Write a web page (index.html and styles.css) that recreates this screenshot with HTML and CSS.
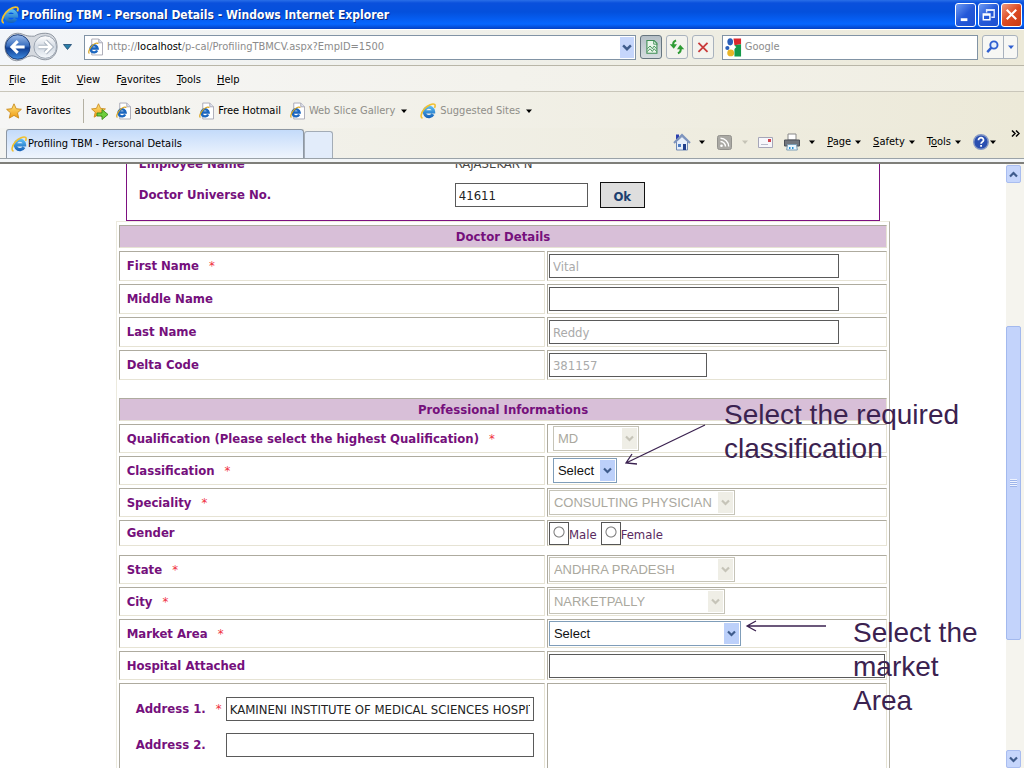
FILE: index.html
```
<!DOCTYPE html>
<html lang="en">
<head>
<meta charset="utf-8">
<title>Profiling TBM - Personal Details</title>
<link rel="stylesheet" href="styles.css">
</head>
<body>
<svg class="defs" aria-hidden="true">
  <defs>
    <linearGradient id="gBlue" x1="0" y1="0" x2="0" y2="1"><stop offset="0" stop-color="#9dbce8"/><stop offset=".45" stop-color="#3a6fc0"/><stop offset=".55" stop-color="#0f3f94"/><stop offset="1" stop-color="#3f8be0"/></linearGradient>
    <linearGradient id="gGrey" x1="0" y1="0" x2="0" y2="1"><stop offset="0" stop-color="#fff"/><stop offset=".5" stop-color="#d3dae3"/><stop offset="1" stop-color="#f6f9fc"/></linearGradient>
    <linearGradient id="gStar" x1="0" y1="0" x2="0" y2="1"><stop offset="0" stop-color="#ffe680"/><stop offset="1" stop-color="#f09a10"/></linearGradient>
    <linearGradient id="gE" gradientUnits="userSpaceOnUse" x1="0" y1="3" x2="0" y2="15"><stop offset="0" stop-color="#5cc0f6"/><stop offset="1" stop-color="#1560b8"/></linearGradient>
    <symbol id="ie" viewBox="0 0 16 16">
      <path d="M13 11.200A4.700 4.700 0 1 1 13.600 8.800H5" fill="none" stroke="url(#gE)" stroke-width="3.200"/>
      <path d="M2.600 15C.2 14.800 .6 10.300 4.200 6 7.800 1.800 13 .2 14.600 1.400c.8.700.6 2-.1 3.400" fill="none" stroke="#f0c030" stroke-width="1.600"/>
    </symbol>
    <symbol id="iepage" viewBox="0 0 16 18">
      <path d="M4 .5h7.500l4 4v13H4z" fill="#fff" stroke="#a7a7b4"/>
      <path d="M11.500.5v4h4" fill="#dfe3ee" stroke="#a7a7b4"/>
      <path d="M9.800 12.700A3.800 3.800 0 1 1 10.200 10.500H3.500" fill="none" stroke="#1b66c0" stroke-width="2.600"/>
      <path d="M1.500 16C-.2 15 1.500 10.500 4.500 7.500 7 5 10 4 11 5.500" fill="none" stroke="#d9a520" stroke-width="1.300"/>
    </symbol>
    <symbol id="star" viewBox="0 0 16 16"><path d="M8 .8l2.200 4.900 5.200.6-3.900 3.500 1.200 5.300L8 12.400l-4.700 2.700 1.200-5.300L.6 6.300l5.200-.6z" fill="url(#gStar)" stroke="#c98a1c" stroke-width=".9"/></symbol>
    <symbol id="caret" viewBox="0 0 6 4"><path d="M0 .5h6L3 4z" fill="currentColor"/></symbol>
    <symbol id="chev" viewBox="0 0 9 8"><path d="M1 2l3.500 3.500L8 2" fill="none" stroke="currentColor" stroke-width="2.200"/></symbol>
  </defs>
</svg>

<header class="titlebar">
  <svg class="i18"><use href="#ie"/></svg>
  <h1 class="title">Profiling TBM - Personal Details - Windows Internet Explorer</h1>
  <button class="winbtn" aria-label="Minimize"><svg viewBox="0 0 20 22"><path d="M5 15h7v3H5z" fill="#fff"/></svg></button>
  <button class="winbtn" aria-label="Restore"><svg viewBox="0 0 20 22"><path d="M8 9V6h8v8h-3M8 6.500h8" fill="none" stroke="#dfe8fb" stroke-width="1.500"/><path d="M4.500 10.500h7v6h-7zM4.500 11.500h7" fill="none" stroke="#fff" stroke-width="1.500"/></svg></button>
  <button class="winbtn close" aria-label="Close"><svg viewBox="0 0 20 22"><path d="M5 6l10 10M15 6L5 16" stroke="#fff" stroke-width="2.200"/></svg></button>
</header>

<div class="navbar">
  <button class="travel" aria-label="Back and forward">
    <svg viewBox="0 0 56 32">
      <path d="M14 2c5 0 7 3 14 3h3c3-2 6-3 11-3 9 0 12 7 12 14s-5 13-12 13-8-4-14-4-8 5-15 5S1 23 1 16 6 2 14 2z" fill="#d5d9df" stroke="#8d949e"/>
      <circle cx="14" cy="16" r="12.500" fill="url(#gBlue)" stroke="#1b3d7a"/>
      <path d="M21 16H9M14 10l-6 6 6 6" fill="none" stroke="#fff" stroke-width="3"/>
      <circle cx="42" cy="16" r="11.500" fill="url(#gGrey)" stroke="#9aa3af"/>
      <path d="M35 16h12M42 10l6 6-6 6" fill="none" stroke="#aab4c0" stroke-width="4.500"/>
      <path d="M35 16h12M42 10l6 6-6 6" fill="none" stroke="#fff" stroke-width="2.500"/>
    </svg>
  </button>
  <button class="plain recent" aria-label="Recent pages"><svg viewBox="0 0 9 6"><path d="M.5.5h8L4.500 5.500z" fill="#2a7fa8" stroke="#1d4770" stroke-width=".8"/></svg></button>
  <div class="address">
    <svg class="page"><use href="#iepage"/></svg>
    <div class="url" role="textbox" aria-label="Address" contenteditable="true" spellcheck="false">http://<span class="host">localhost</span>/p-cal/ProfilingTBMCV.aspx?EmpID=1500</div>
    <button class="drop" aria-label="Show address list"><svg><use href="#chev"/></svg></button>
  </div>
  <button class="navbtn compat" aria-label="Compatibility view"><svg viewBox="0 0 22 24"><path d="M6.500 5h8l3 3v11h-11z" fill="#e9f6ea" stroke="#3f8f55" stroke-width="1.200"/><path d="M14 5v4h4M7 14l3-3 2.500 3 2-3 2.500 3M7 17l3-3 2.500 3 2-3 2.500 3" fill="none" stroke="#3f8f55"/></svg></button>
  <button class="navbtn" aria-label="Refresh"><svg viewBox="0 0 22 24"><path d="M10 5C7 6 6.500 8 7 10" fill="none" stroke="#2d9b33" stroke-width="2.200"/><path d="M3 9h8L7.500 14z" fill="#2d9b33"/><path d="M12 19c3-1 3.500-3 3-6" fill="none" stroke="#2d9b33" stroke-width="2.200"/><path d="M11 14.500h8L14.500 9.500z" fill="#2d9b33"/></svg></button>
  <button class="navbtn" aria-label="Stop"><svg viewBox="0 0 22 24"><path d="M6 7.500l10 10M16 7.500l-10 10" stroke="#c93a3a" stroke-width="2"/></svg></button>
  <div class="search">
    <svg class="google" viewBox="0 0 18 19"><path d="M9 0h8v6l-7 1z" fill="#d9282e"/><path d="M10 7l7-1v13h-7z" fill="#159a4a"/><ellipse cx="5.500" cy="3.500" rx="3" ry="3.800" fill="#2a5fb8"/><circle cx="2.500" cy="10" r="2.200" fill="#2a5fb8"/><circle cx="6" cy="15.200" r="3.600" fill="#eab526"/><path d="M8 6l4 3-3 3" fill="#fff"/></svg>
    <input class="searchbox" type="text" placeholder="Google" aria-label="Search">
  </div>
  <div class="split">
    <button class="go" aria-label="Search"><svg viewBox="0 0 20 24"><circle cx="11.500" cy="9.500" r="3.800" fill="#e6f0fc" stroke="#2f5fd0" stroke-width="2"/><path d="M8.800 12.200L4.500 17" stroke="#2f5fd0" stroke-width="2.500"/></svg></button>
    <button class="more" aria-label="Search options"><svg><use href="#caret"/></svg></button>
  </div>
</div>

<nav class="menubar">
  <button><u>F</u>ile</button><button><u>E</u>dit</button><button><u>V</u>iew</button><button>F<u>a</u>vorites</button><button><u>T</u>ools</button><button><u>H</u>elp</button>
</nav>

<nav class="favbar">
  <button class="fav first"><svg class="i16"><use href="#star"/></svg>Favorites</button>
  <button class="fav add" aria-label="Add to Favorites bar"><svg class="i18" viewBox="0 0 18 18"><use href="#star" width="15" height="15" y="1"/><path d="M6 11h5V7.500l6 5-6 5V14H6z" fill="#6fce3c" stroke="#3a8a1c" stroke-width=".9"/></svg></button>
  <a class="fav" href="#"><svg class="page"><use href="#iepage"/></svg>aboutblank</a>
  <a class="fav" href="#"><svg class="page"><use href="#iepage"/></svg>Free Hotmail</a>
  <a class="fav dim" href="#"><svg class="page"><use href="#iepage"/></svg>Web Slice Gallery<svg class="caret"><use href="#caret"/></svg></a>
  <a class="fav dim" href="#"><svg class="i16"><use href="#ie"/></svg>Suggested Sites<svg class="caret"><use href="#caret"/></svg></a>
</nav>

<div class="tabrow">
  <button class="tab"><svg class="i16"><use href="#ie"/></svg>Profiling TBM - Personal Details</button>
  <button class="newtab" aria-label="New tab"></button>
  <div class="commands">
    <button class="cmd" aria-label="Home"><svg class="i18" viewBox="0 0 18 18"><path d="M3.500 8.500V17h11V8.500L9 3.500z" fill="#e6eefa" stroke="#7089b4"/><path d="M3 1.500h3v5H3z" fill="#2b3fae"/><path d="M1 10l8-8 8 8" fill="none" stroke="#7d93bd" stroke-width="2"/><path d="M10 11h3v6h-3z" fill="#1f3e8c"/><path d="M5 11h3v3H5z" fill="#4d7cc4"/></svg><svg class="caret"><use href="#caret"/></svg></button>
    <button class="cmd off" aria-label="Feeds"><svg class="i15" viewBox="0 0 15 15"><rect x=".5" y=".5" width="14" height="14" rx="2" fill="#aaa9a4" stroke="#94938e"/><circle cx="4.500" cy="10.700" r="1.300" fill="#fff"/><path d="M3.500 6.500a5 5 0 0 1 5 5M3.500 3.300a8.200 8.200 0 0 1 8.200 8.200" fill="none" stroke="#fff" stroke-width="1.400"/></svg><svg class="caret"><use href="#caret"/></svg></button>
    <button class="cmd mail" aria-label="Read mail"><svg class="i15" viewBox="0 0 15 15"><path d="M.5 2.500h14v10H.5z" fill="#f7f7fb" stroke="#a6a6b8"/><path d="M3 9.500h7" stroke="#b9bccb"/><path d="M10 4h3v3h-3z" fill="#d0444f"/></svg></button>
    <button class="cmd" aria-label="Print"><svg class="i18" viewBox="0 0 18 18"><path d="M5 1h8v6H5z" fill="#fff" stroke="#888"/><path d="M1.500 7h15v6h-15z" fill="#71757d" stroke="#4c5058"/><path d="M4.500 11.500h9l.8 5.500H3.700z" fill="#eaf6ff" stroke="#7c9db5"/><path d="M6 14h1.500v2H6zM9 14h1.500v2H9z" fill="#2f92d0"/></svg><svg class="caret"><use href="#caret"/></svg></button>
    <button class="cmd text"><span><u>P</u>age</span><svg class="caret"><use href="#caret"/></svg></button>
    <button class="cmd text"><span><u>S</u>afety</span><svg class="caret"><use href="#caret"/></svg></button>
    <button class="cmd text"><span>T<u>o</u>ols</span><svg class="caret"><use href="#caret"/></svg></button>
    <button class="cmd help" aria-label="Help"><svg class="i16" viewBox="0 0 16 16"><circle cx="8" cy="8" r="7.300" fill="#2a4fb0" stroke="#8497c4" stroke-width="1.400"/><path d="M5.500 6.200c0-3.400 5.200-3.200 5 0-.1 1.700-2.400 1.700-2.400 3.600M8.100 11v1.800" fill="none" stroke="#fff" stroke-width="1.800"/></svg><svg class="caret"><use href="#caret"/></svg></button>
    <button class="overflow" aria-label="More commands"><svg viewBox="0 0 9 7"><path d="M1 .5l3 3-3 3M5 .5l3 3-3 3" fill="none" stroke="#000" stroke-width="1.500"/></svg></button>
  </div>
</div>

<div class="viewport">
  <main class="page-area">
    <section class="lookup">
      <div class="lrow"><span class="label">Employee Name</span><span class="value">RAJASEKAR N</span></div>
      <div class="lrow">
        <label class="label" for="uni">Doctor Universe No.</label>
        <span class="pair"><input id="uni" class="box" type="text" value="41611"><button class="ok">Ok</button></span>
      </div>
    </section>

    <table class="details">
      <colgroup><col class="c1"><col></colgroup>
      <tbody>
      <tr class="head"><th colspan="2">Doctor Details</th></tr>
      <tr class="tall"><td><label for="fn">First Name</label><i>*</i></td><td><input id="fn" class="box long" value="Vital" disabled></td></tr>
      <tr class="tall"><td><label for="mn">Middle Name</label></td><td><input id="mn" class="box long"></td></tr>
      <tr class="tall"><td><label for="ln">Last Name</label></td><td><input id="ln" class="box long" value="Reddy" disabled></td></tr>
      <tr class="tall"><td><label for="dc">Delta Code</label></td><td><input id="dc" class="box code" value="381157" disabled></td></tr>
      <tr class="gap"><td colspan="2"></td></tr>
      <tr class="head"><th colspan="2">Professional Informations</th></tr>
      <tr><td><label for="q">Qualification (Please select the highest Qualification)</label><i>*</i></td><td><span class="sel s86 inset off"><select id="q" disabled><option>MD</option></select><svg><use href="#chev"/></svg></span></td></tr>
      <tr><td><label for="cl">Classification</label><i>*</i></td><td><span class="sel s64 inset"><select id="cl"><option>Select</option></select><svg><use href="#chev"/></svg></span></td></tr>
      <tr><td><label for="sp">Speciality</label><i>*</i></td><td><span class="sel s186 off"><select id="sp" disabled><option>CONSULTING PHYSICIAN</option></select><svg><use href="#chev"/></svg></span></td></tr>
      <tr class="short"><td>Gender</td><td><div class="radios"><input type="radio" name="g" id="m"><label for="m">Male</label><input type="radio" name="g" id="f"><label for="f">Female</label></div></td></tr>
      <tr class="gap small"><td colspan="2"></td></tr>
      <tr><td><label for="st">State</label><i>*</i></td><td><span class="sel s186 off"><select id="st" disabled><option>ANDHRA PRADESH</option></select><svg><use href="#chev"/></svg></span></td></tr>
      <tr><td><label for="ci">City</label><i>*</i></td><td><span class="sel s176 off"><select id="ci" disabled><option>NARKETPALLY</option></select><svg><use href="#chev"/></svg></span></td></tr>
      <tr><td><label for="ma">Market Area</label><i>*</i></td><td><span class="sel s192"><select id="ma"><option>Select</option></select><svg><use href="#chev"/></svg></span></td></tr>
      <tr><td><label for="ha">Hospital Attached</label></td><td><input id="ha" class="box full"></td></tr>
      <tr class="addr"><td>
        <div class="arow"><span><label for="a1">Address 1.</label><i>*</i></span><input id="a1" class="box" value="KAMINENI INSTITUTE OF MEDICAL SCIENCES HOSPITAL"></div>
        <div class="arow"><span><label for="a2">Address 2.</label></span><input id="a2" class="box"></div>
      </td><td></td></tr>
      </tbody>
    </table>
  </main>
  <div class="scroll" aria-hidden="true">
    <span class="sbtn up"><svg><use href="#chev"/></svg></span>
    <span class="above"></span>
    <span class="thumb"><b></b></span>
    <span class="below"></span>
    <span class="sbtn"><svg><use href="#chev"/></svg></span>
  </div>

  <p class="note one">Select the required<br>classification</p>
  <svg class="arrow a-one" viewBox="0 0 84 44"><path d="M82 2L3 40M9 31L3 40l11 1" fill="none" stroke="#3b2250" stroke-width="1.300"/></svg>
  <p class="note two">Select the<br>market<br>Area</p>
  <svg class="arrow a-two" viewBox="0 0 82 14"><path d="M81 7H2M11 2L2 7l9 5" fill="none" stroke="#3b2250" stroke-width="1.300"/></svg>
</div>
</body>
</html>
```
FILE: styles.css
```
* { box-sizing: border-box; }
body {
  margin: 0;
  height: 100vh;
  display: flex;
  flex-direction: column;
  overflow: hidden;
  background: #fff;
  color: #000;
  font: 11px/16px "DejaVu Sans Condensed", Tahoma, sans-serif;
}
button, input, select { font: inherit; color: inherit; margin: 0; padding: 0; border-radius: 0; }
button { border: 0; background: none; flex: none; }
svg { display: block; flex: none; }
.defs { position: absolute; width: 0; height: 0; }
.i15 { width: 15px; height: 15px; }
.i16 { width: 16px; height: 16px; }
.i18 { width: 18px; height: 18px; }
.page { width: 15px; height: 18px; }
.caret { width: 6px; height: 4px; color: #000; }

/* title bar */
.titlebar {
  flex: none;
  height: 29px;
  display: flex;
  align-items: center;
  gap: 2px;
  padding: 0 2px 0 1px;
  background: linear-gradient(#2a6fe8 0, #0a50dc 3px, #0450dc 12px, #0666ff 24px, #0340c4 29px);
}
.title {
  flex: 1;
  margin: 0;
  overflow: hidden;
  white-space: nowrap;
  font-size: 12px;
  font-weight: 700;
  color: #fff;
  text-shadow: 1px 1px 0 #0a2a80;
}
.winbtn {
  width: 21px;
  height: 24px;
  border: 1px solid #fff;
  border-radius: 3px;
  background: linear-gradient(135deg, #6f9cf4, #2458d8 50%, #1d4fd0);
}
.winbtn.close { background: linear-gradient(135deg, #f09a80, #dd4a22 50%, #c83a14); }

/* address row */
.navbar {
  flex: none;
  height: 37px;
  display: flex;
  align-items: center;
  gap: 4px;
  padding: 0 6px 0 4px;
  background: linear-gradient(90deg, #f3f6fa, #ece9d8);
  border-bottom: 1px solid #b9b6a8;
  box-shadow: inset 0 1px #fff;
}
.travel svg { width: 55px; height: 32px; }
.recent { margin-right: 8px; }
.recent svg { width: 9px; height: 6px; }
.address, .search {
  height: 25px;
  display: flex;
  align-items: center;
  background: #fff;
  border: 1px solid #8193a5;
}
.address { flex: 555; gap: 4px; padding-left: 3px; }
.search { flex: 256; margin-left: 4px; gap: 3px; padding-left: 2px; }
.url { flex: 1; color: #8b8b8b; outline: 0; white-space: nowrap; }
.host { color: #000; }
.drop {
  width: 14px;
  height: 21px;
  margin-right: 1px;
  padding: 6px 2px;
  background: #c6d6fb;
  color: #3f5c8c;
}
.drop svg { width: 10px; height: 9px; }
.navbtn {
  width: 22px;
  height: 24px;
  border: 1px solid #a9b2bd;
  border-radius: 3px;
  background: #f3f3ee;
}
.navbtn.compat { background: linear-gradient(#b5bfc6, #d6dde0); border-color: #66757f; }
.google { width: 17px; height: 19px; }
.searchbox { flex: 1; min-width: 0; border: 0; background: none; outline: 0; }
.searchbox::placeholder { color: #8b8b8b; opacity: 1; }
.split { display: flex; height: 24px; border: 1px solid #a9b2bd; border-radius: 3px; background: #f7f7f4; }
.go { width: 20px; }
.go svg { width: 19px; }
.more { width: 14px; padding: 0 4px; border-left: 1px solid #a9b2bd; color: #2f5fd0; }
.more svg { width: 6px; height: 4px; }

/* menu and favourites */
.menubar {
  flex: none;
  height: 26px;
  display: flex;
  align-items: center;
  gap: 16px;
  padding: 2px 9px 0;
  background: linear-gradient(90deg, #f6f6f6, #f0eee2);
  border-bottom: 1px solid #c9c6ba;
}
.favbar {
  flex: none;
  height: 36px;
  display: flex;
  align-items: center;
  gap: 9px;
  padding: 2px 6px 0;
  background: linear-gradient(90deg, #f6f6f5, #ece9d8);
}
.fav { display: flex; align-items: center; gap: 4px; color: #000; text-decoration: none; white-space: nowrap; }
.fav.first { padding-right: 12px; border-right: 1px solid #b4b1a3; height: 24px; }
.fav.add { margin: 0 -2px; }
.fav.dim { color: #8f8e88; }
.fav .caret { margin: 0 4px 0 2px; }

/* tabs and command bar */
.tabrow {
  flex: none;
  height: 36px;
  display: flex;
  align-items: flex-end;
  padding: 0 4px 4px 6px;
  background: linear-gradient(#9aa2a8, #9aa2a8) 0 30px / 100% 1px no-repeat, linear-gradient(#f3f6f8, #f3f6f8) 0 31px / 100% 4px no-repeat, linear-gradient(90deg, #f4f4f1, #ece9d8);
  border-bottom: 2px solid #7f7f7a;
}
.tab {
  flex: 0 1 298px;
  height: 29px;
  display: flex;
  align-items: center;
  gap: 1px;
  padding: 0 4px;
  border: 1px solid #8d97a3;
  border-bottom: 0;
  border-radius: 3px 3px 0 0;
  background: linear-gradient(#c4dbfa, #eff5fd);
  white-space: nowrap;
}
.newtab { width: 29px; height: 27px; border: 1px solid #a3acb6; border-bottom: 0; border-radius: 3px 3px 0 0; background: #e2ecfa; }
.commands { margin-left: auto; display: flex; align-items: center; gap: 12px; height: 32px; }
.cmd { display: flex; align-items: center; gap: 8px; }
.cmd.off .caret { color: #c5c3b6; margin-left: 2px; }
.cmd.text { gap: 4px; }
.cmd.help { gap: 1px; }
.cmd.mail { margin: 0 -2px; }
.overflow { align-self: flex-start; padding-top: 4px; margin-left: 3px; }
.overflow svg { width: 9px; height: 7px; }

/* page */
.viewport {
  flex: 1;
  min-height: 0;
  display: flex;
  position: relative;
  overflow: hidden;
  font: 13px/16px "DejaVu Sans Condensed", Verdana, sans-serif;
}
.page-area { flex: 1; min-width: 0; overflow: hidden; }
.lookup {
  width: 75%;
  margin: -8px auto 0;
  padding: 0 0 12px 12px;
  border: 1px solid #7d1080;
  border-top: 0;
  display: grid;
  gap: 10px;
}
.lrow { display: grid; grid-template-columns: 316px 1fr; align-items: center; }
.label, .details { color: #75107c; font-weight: 700; }
.value { font-weight: 400; color: #444; }
.pair { display: flex; align-items: center; gap: 12px; }
.pair .box { width: 133px; }
.box {
  display: block;
  height: 24px;
  border: 1px solid #5a5a5a;
  background: #fff;
  padding: 0 3px;
  font-weight: 400;
  color: #222;
}
.box:disabled { color: #aaa; }
.ok { width: 45px; height: 26px; border: 1px solid #111; background: #dedede; color: #1c3f70; font-weight: 700; padding-top: 3px; }

.details {
  width: 77%;
  margin: 0 auto;
  table-layout: fixed;
  border-collapse: separate;
  border-spacing: 2px 3px;
  border: 1px solid #eceade;
  border-right-color: #b5b2a6;
}
.c1 { width: 55.6%; }
.details tr { height: 29px; }
.details td, .details th {
  padding: 0 1px;
  border: 1px solid #e6e3d4;
  border-top-color: #aeab9f;
  border-left-color: #aeab9f;
  vertical-align: middle;
}
.details td:first-child { padding-left: 7px; }
.details .head { height: 23px; }
.details th { background: #d8bfd8; }
.details .tall { height: 30px; }
.details .short { height: 26px; }
.details .gap { height: 12px; }
.details .gap td { border: 0; padding: 0; }
.details .small { height: 3px; }
.details i { margin-left: 10px; font-style: normal; font-weight: 400; color: #f03040; }
.long { width: 290px; max-width: 100%; }
.code { width: 158px; }
.full { width: 100%; }

.sel { display: block; position: relative; height: 25px; font: 13px/16px "Liberation Sans", Arial, sans-serif; color: #111; }
.sel select {
  appearance: none;
  width: 100%;
  height: 25px;
  padding: 0 18px 0 4px;
  border: 1px solid #7f9db9;
  background: #fff;
  color: #111;
  opacity: 1;
}
.sel svg {
  position: absolute;
  top: 2px;
  right: 2px;
  width: 15px;
  height: 21px;
  padding: 6px 3px;
  background: #bcd0fa;
  color: #3f5c8c;
  pointer-events: none;
}
.sel.off select { border-color: #c6c4b8; color: #aaa89e; }
.sel.off svg { background: #efeee6; color: #c6c4b8; }
.inset { margin-left: 4px; }
.s64 { width: 64px; }
.s86 { width: 86px; }
.s176 { width: 176px; }
.s186 { width: 186px; }
.s192 { width: 192px; }

.radios { display: flex; align-items: center; font-weight: 400; color: #5a2a60; }
.radios label { padding-top: 4px; margin-right: 4px; }
.radios input {
  appearance: none;
  width: 20px;
  height: 23px;
  border: 1px solid #555;
  background: radial-gradient(circle at 9px 9px, #fff 4px, #777 5px, #fff 6px);
}

.details .addr { height: 120px; }
.addr td { vertical-align: top; }
.addr td:first-child { padding: 13px 10px 0 16px; }
.arow { display: grid; grid-template-columns: 90px 1fr; align-items: center; margin-bottom: 12px; }
.arow .box { width: 100%; }

/* scroll bar */
.scroll { flex: none; width: 18px; display: flex; flex-direction: column; padding: 1px 3px 0 0; background: #f5f4ee; }
.sbtn { height: 18px; padding: 4px 2px; border: 1px solid #a9bdf0; border-radius: 2px; background: #c6d6fc; color: #3f5c8c; }
.sbtn svg { width: 9px; height: 9px; }
.sbtn.up svg { transform: rotate(180deg); }
.above { flex: 143; }
.below { flex: 110; }
.thumb { flex: 313; display: flex; align-items: center; justify-content: center; border: 1px solid #a3b9ee; border-radius: 2px; background: #c3d3fb; }
.thumb b { width: 7px; height: 8px; background: repeating-linear-gradient(#eef3ff 0 1px, #9db4ea 1px 2px); }

/* callouts drawn over the page */
.note { position: absolute; margin: 0; font: 28px/34px "Liberation Sans", Arial, sans-serif; color: #3b2250; white-space: nowrap; }
.arrow { position: absolute; }
.note.one { left: 724px; top: 234px; }
.a-one { left: 623px; top: 259px; width: 84px; height: 44px; }
.note.two { left: 853px; top: 452px; }
.a-two { left: 745px; top: 455px; width: 82px; height: 14px; }
```
